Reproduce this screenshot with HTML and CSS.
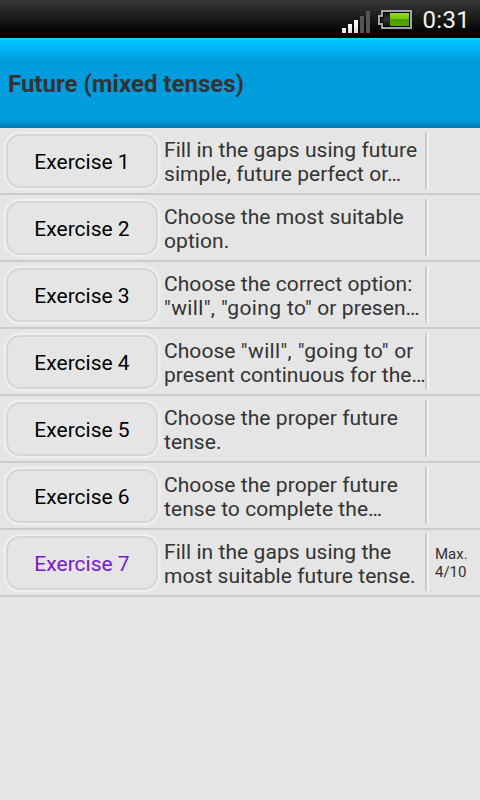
FILE: index.html
```html
<!DOCTYPE html>
<html lang="en">
<head>
    <meta charset="UTF-8">
    <meta name="viewport" content="width=device-width, initial-scale=1.0">
    <title>Future (mixed tenses)</title>
    <link rel="stylesheet" href="styles.css">
</head>
<body>

    <!-- Status bar -->
    <div class="status-bar">
        <svg class="signal" width="28" height="22" viewBox="0 0 28 22">
            <defs>
                <linearGradient id="bar" x1="0" y1="0" x2="0" y2="1">
                    <stop offset="0" stop-color="#ffffff"/>
                    <stop offset="1" stop-color="#dddddd"/>
                </linearGradient>
            </defs>
            <rect x="0" y="17" width="4" height="5" fill="url(#bar)"/>
            <rect x="6" y="13" width="4" height="9" fill="url(#bar)"/>
            <rect x="12" y="9" width="4" height="13" fill="url(#bar)"/>
            <rect x="18" y="5" width="4" height="17" fill="#555"/>
            <rect x="24" y="0" width="4" height="22" fill="#555"/>
        </svg>
        <svg class="battery" width="34" height="20" viewBox="0 0 34 20">
            <defs>
                <linearGradient id="charge" x1="0" y1="0" x2="0" y2="1">
                    <stop offset="0" stop-color="#8fe01f"/>
                    <stop offset="0.48" stop-color="#6fc30c"/>
                    <stop offset="0.5" stop-color="#4c9c00"/>
                    <stop offset="1" stop-color="#55a500"/>
                </linearGradient>
                <linearGradient id="empty" x1="0" y1="0" x2="0" y2="1">
                    <stop offset="0" stop-color="#111"/>
                    <stop offset="0.5" stop-color="#333"/>
                    <stop offset="1" stop-color="#111"/>
                </linearGradient>
            </defs>
            <path d="M4 1H33V18H4V14H1V6H4Z" fill="#000" stroke="#a5a5a5" stroke-width="2"/>
            <rect x="6" y="3" width="6" height="13" fill="url(#empty)"/>
            <rect x="3" y="8" width="3" height="4" fill="#222"/>
            <rect x="12" y="3" width="19" height="13" fill="url(#charge)"/>
        </svg>
        <span class="clock">0:31</span>
    </div>

    <h1 class="title-bar">Future (mixed tenses)</h1>

    <!-- Exercise list -->
    <ul class="exercise-list">
        <li class="exercise">
            <button class="exercise-button">Exercise 1</button>
            <p class="description">Fill in the gaps using future<br>simple, future perfect or…</p>
            <div class="score"></div>
        </li>
        <li class="exercise">
            <button class="exercise-button">Exercise 2</button>
            <p class="description">Choose the most suitable<br>option.</p>
            <div class="score"></div>
        </li>
        <li class="exercise">
            <button class="exercise-button">Exercise 3</button>
            <p class="description">Choose the correct option:<br><span class="quoted">"will", "going to"</span> or presen…</p>
            <div class="score"></div>
        </li>
        <li class="exercise">
            <button class="exercise-button">Exercise 4</button>
            <p class="description">Choose <span class="quoted">"will", "going to"</span> or<br>present continuous for the…</p>
            <div class="score"></div>
        </li>
        <li class="exercise">
            <button class="exercise-button">Exercise 5</button>
            <p class="description">Choose the proper future<br>tense.</p>
            <div class="score"></div>
        </li>
        <li class="exercise">
            <button class="exercise-button">Exercise 6</button>
            <p class="description">Choose the proper future<br>tense to complete the…</p>
            <div class="score"></div>
        </li>
        <li class="exercise">
            <button class="exercise-button done">Exercise 7</button>
            <p class="description">Fill in the gaps using the<br>most suitable future tense.</p>
            <div class="score">Max.<br>4/10</div>
        </li>
    </ul>

</body>
</html>
```
FILE: styles.css
```css
* {
    box-sizing: border-box;
}

body {
    margin: 0;
    min-height: 100vh;
    background-color: #e5e5e5;
    color: #333;
    font-family: Roboto, sans-serif;
}

/* Status bar */
.status-bar {
    display: flex;
    justify-content: flex-end;
    align-items: flex-start;
    height: 38px;
    padding-right: 10px;
    background: linear-gradient(#383836, #000 90%);
}

.signal {
    margin-top: 11px;
}

.battery {
    margin: 10px 11px 0 8px;
}

.clock {
    color: #f2f2f2;
    font-size: 24px;
    line-height: 40px;
    letter-spacing: 0.3px;
}

/* Page title */
.title-bar {
    height: 90px;
    margin: 0;
    padding: 1px 8px 0;
    background: linear-gradient(#00d8ff 0, #00c0ff 4px, #00b2f6 12px, #009cdb 23px, #009cdb 82px, #0077aa 90px);
    font-size: 24px;
    font-weight: bold;
    line-height: 90px;
}

/* Exercise rows */
.exercise-list {
    margin: 0;
    padding: 0;
    list-style: none;
}

.exercise {
    display: flex;
    height: 67px;
    padding: 4px 0 4px 6px;
    border-bottom: 2px solid #cbcbcb;
}

.exercise-button {
    width: 152px;
    height: 54px;
    margin: 2px 6px 0 0;
    padding: 1px 0 0;
    border: 2px solid #d6d6d6;
    border-radius: 14px;
    background-color: #e5e5e5;
    box-shadow: 0 0 2px 2px #f2f2f2;
    color: #000;
    font-family: inherit;
    font-size: 21px;
}

.exercise-button.done {
    color: #7719d2;
}

.description {
    width: 261px;
    margin: 0;
    padding-top: 7px;
    font-size: 21px;
    line-height: 23.5px;
    letter-spacing: 0.06px;
    white-space: nowrap;
}

.quoted {
    letter-spacing: 0.36px;
}

.score {
    flex: 1;
    height: 57px;
    padding: 11px 0 0 8px;
    border-left: 2px solid #cbcbcb;
    box-shadow: inset 2px 0 #f2f2f2;
    font-size: 15px;
    line-height: 18px;
}
```
